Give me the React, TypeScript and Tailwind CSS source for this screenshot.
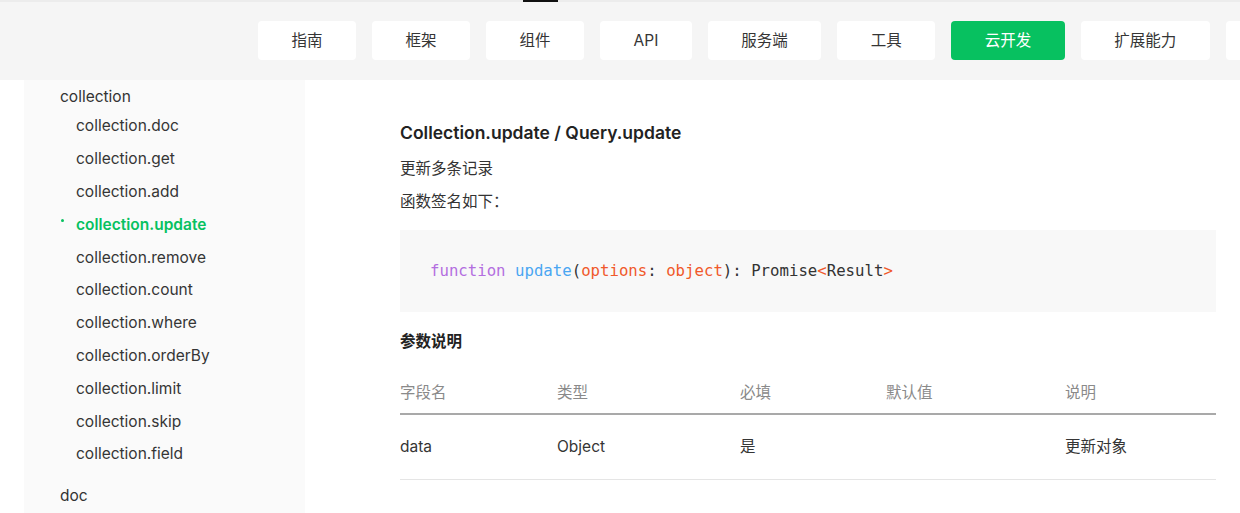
import React from "react";

const navItems = ["指南", "框架", "组件", "API", "服务端", "工具", "云开发", "扩展能力"];

const subItems = [
  "collection.doc",
  "collection.get",
  "collection.add",
  "collection.update",
  "collection.remove",
  "collection.count",
  "collection.where",
  "collection.orderBy",
  "collection.limit",
  "collection.skip",
  "collection.field",
];

const font = "font-['Inter','Noto_Sans_CJK_SC',sans-serif]";

const App: React.FC = () => {
  return (
    <div className={`w-[1240px] h-[513px] overflow-hidden bg-white text-[#333] ${font}`}>
      {/* header */}
      <div className="h-[80px] bg-[#f5f5f5]">
        <div className="h-[2px] bg-[#ececec] flex">
          <div className="ml-[523px] w-[35px] h-[2px] bg-[#111]" />
        </div>
        <div className="flex gap-4 pl-[258px] pt-[19px]">
          {navItems.map((item) => (
            <div
              key={item}
              className={`shrink-0 h-[39px] px-[33.5px] rounded-[4px] flex items-center text-[15.5px] ${
                item === "云开发" ? "bg-[#07c160] text-white" : "bg-white text-[#353535]"
              }`}
            >
              {item}
            </div>
          ))}
          <div className="shrink-0 h-[39px] w-[90px] rounded-[4px] bg-white" />
        </div>
      </div>

      <div className="flex">
        {/* sidebar */}
        <div className="ml-[24px] w-[281px] h-[433px] bg-[#fafafa] shrink-0 pt-[1px]">
          <div className="pl-[36px] h-[28.6px] leading-[32px] text-[15.5px]">collection</div>
          {subItems.map((item) => {
            const active = item === "collection.update";
            return (
              <div
                key={item}
                className={`relative pl-[52px] h-[32.8px] flex items-center text-[15.5px] ${
                  active ? "text-[#07c160] font-semibold" : "text-[#353535]"
                }`}
              >
                {active && <span className="absolute left-[37px] top-[11px] w-[3px] h-[3px] rounded-full bg-[#07c160]" />}
                {item}
              </div>
            );
          })}
          <div className="pl-[36px] mt-[9.6px] leading-[32px] text-[15.5px]">doc</div>
        </div>

        {/* content */}
        <div className="pl-[95px] w-[911px] shrink-0 pt-[41px]">
          <div className="leading-[24px] text-[17.5px] font-semibold text-[#222]">Collection.update / Query.update</div>
          <div className="mt-[12px] leading-[24px] text-[15.5px]">更新多条记录</div>
          <div className="mt-[9px] leading-[24px] text-[15.5px]">函数签名如下：</div>
          <div className="mt-[16px] h-[82px] bg-[#f8f8f8] px-[30px] flex items-center font-['DejaVu_Sans_Mono',monospace] text-[15.7px] text-[#333]">
            <span className="text-[#b36ee0]">function</span>
            <span>&nbsp;</span>
            <span className="text-[#4aa6f2]">update</span>
            <span>(</span>
            <span className="text-[#f0592b]">options</span>
            <span>:&nbsp;</span>
            <span className="text-[#f0592b]">object</span>
            <span>):&nbsp;Promise</span>
            <span className="text-[#f0592b]">&lt;</span>
            <span>Result</span>
            <span className="text-[#f0592b]">&gt;</span>
          </div>
          <div className="mt-[18px] leading-[24px] text-[15.5px] font-semibold text-[#222]">参数说明</div>
          <div className="mt-[19px] h-[42px] grid grid-cols-[157px_183px_146px_179px_1fr] items-center border-b-2 border-[#a9a9a9] text-[15.5px] text-[#8a8a8a]">
            <div>字段名</div>
            <div>类型</div>
            <div>必填</div>
            <div>默认值</div>
            <div>说明</div>
          </div>
          <div className="h-[65px] grid grid-cols-[157px_183px_146px_179px_1fr] items-center border-b border-[#e5e5e5] text-[15.5px] text-[#353535]">
            <div>data</div>
            <div>Object</div>
            <div>是</div>
            <div></div>
            <div>更新对象</div>
          </div>
        </div>
      </div>
    </div>
  );
};

export default App;
